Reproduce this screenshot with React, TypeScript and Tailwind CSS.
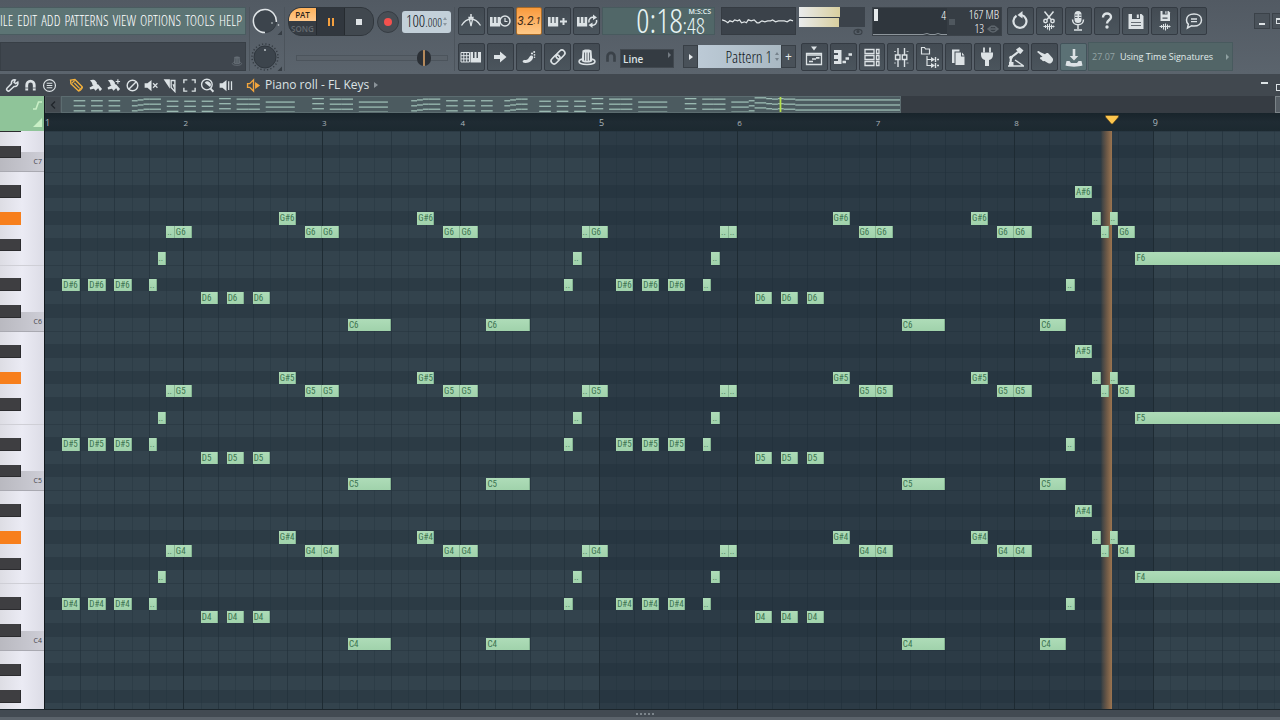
import type { ReactNode } from "react";

const STEPS_IN_VIEW = 142.7;
const STEPS_IN_SONG = 144;
const TOP_PITCH = 84;
const ROWS_ABOVE_TOP = 2.05;
const ROWS_IN_VIEW = 43.5;
const NOTE_NAMES = ["C", "C#", "D", "D#", "E", "F", "F#", "G", "G#", "A", "A#", "B"];
const BLACK_KEYS = [1, 3, 6, 8, 10];
const PLAYHEAD_STEP = 123.3;

// [start step, semitone above C, length in steps]
const PHRASE: Array<[number, number, number]> = [
  [2, 3, 2], [5, 3, 2], [8, 3, 2], [12, 3, 1], [13, 5, 1], [14, 7, 1], [15, 7, 2],
  [18, 2, 2], [21, 2, 2], [24, 2, 2], [27, 8, 2], [30, 7, 2], [32, 7, 2], [35, 0, 5],
  [43, 8, 2], [46, 7, 2], [48, 7, 2], [51, 0, 5], [60, 3, 1], [61, 5, 1], [62, 7, 1], [63, 7, 2],
  [66, 3, 2], [69, 3, 2], [72, 3, 2], [76, 3, 1], [77, 5, 1], [78, 7, 1], [79, 7, 1],
  [82, 2, 2], [85, 2, 2], [88, 2, 2], [91, 8, 2], [94, 7, 2], [96, 7, 2], [99, 0, 5],
  [107, 8, 2], [110, 7, 2], [112, 7, 2], [115, 0, 3], [118, 3, 1], [119, 10, 2],
  [121, 8, 1], [122, 7, 1], [123, 8, 1], [124, 7, 2], [126, 5, 18],
];

const NOTES = [6, 5, 4].flatMap((octave) =>
  PHRASE.map(([start, semitone, length]) => ({
    start,
    length,
    pitch: octave * 12 + semitone,
    label: length === 1 ? ".." : `${NOTE_NAMES[semitone]}${octave}`,
  })),
);

const PITCHES = Array.from({ length: 47 }, (_, i) => TOP_PITCH + 3 - i);

const xPct = (step: number) => `${(step / STEPS_IN_VIEW) * 100}%`;
const yPct = (pitch: number) => `${((TOP_PITCH - pitch + ROWS_ABOVE_TOP) / ROWS_IN_VIEW) * 100}%`;
const hPct = (rows: number) => `${(rows / ROWS_IN_VIEW) * 100}%`;

const condensed =
  "font-['Open_Sans_Condensed_Light','Open_Sans_Condensed','Roboto_Condensed','Liberation_Sans_Narrow','Liberation_Sans',sans-serif] font-light";

function Svg({ children, size = 24, className = "" }: { children: ReactNode; size?: number; className?: string }) {
  return (
    <svg
      viewBox="0 0 24 24"
      width={size}
      height={size}
      fill="none"
      stroke="currentColor"
      strokeWidth={1.5}
      className={`shrink-0 ${className}`}
      aria-hidden="true"
    >
      {children}
    </svg>
  );
}

const fill = { fill: "currentColor", stroke: "none" };
const keysPath = "M2 8h2.6v6h1.2V8h2.6v6h1.2V8h2.6v9.5H2z";

const icons: Record<string, ReactNode> = {
  metronome: (
    <>
      <path d="M2.500 16.500C5 12.500 8 10 12 10s7 2.500 9.500 6.500" strokeWidth={1.3} />
      <path d="M10 8.500h4L12 17z" strokeWidth={1.3} />
      <path d="M12 5v5" />
    </>
  ),
  wait: (
    <>
      <path {...fill} d={keysPath} />
      <circle cx="17" cy="12" r="5" fill="#464f57" />
      <path d="M17 9v3.500h2.500" strokeWidth={1.2} />
    </>
  ),
  keysPlus: (
    <>
      <path {...fill} d={keysPath} />
      <path d="M17.500 9v7M14 12.500h7" strokeWidth={2} />
    </>
  ),
  loopRecord: (
    <>
      <path {...fill} d={keysPath} />
      <path d="M14 13.500a4 4 0 0 1 5-5M21.500 11a4 4 0 0 1-5 5" strokeWidth={1.6} />
      <path {...fill} d="M18 5.500l4 3-4 2.500zM17.500 13.500l-4 2.500 4 3z" />
    </>
  ),
  gridKeys: (
    <>
      <path d="M2 7.500h8.500v9.500H2zM2 10.700h8.500M2 13.900h8.500M4.800 7.500V17M7.700 7.500V17" strokeWidth={1} />
      <path {...fill} d="M11.500 7H14v6h1.500V7h2v6H19V7h3v10.500H11.500z" />
    </>
  ),
  arrow: <path {...fill} d="M6 10h6V6.500l6.500 5.500-6.500 5.500V14H6z" />,
  step: (
    <>
      <path {...fill} d="M6 15.500c2-1 3.500 0 5-1.500s1.500-3.500 3.500-3.500 2 2.500.5 4.500-4 3-6.500 3-3.500-1.500-2.500-2.500z" />
      <circle {...fill} cx="15" cy="8.500" r="1.1" />
      <circle {...fill} cx="17.200" cy="7" r="1" />
      <circle {...fill} cx="17.500" cy="9.800" r=".9" />
      <circle {...fill} cx="17.500" cy="12.200" r=".8" />
    </>
  ),
  link: (
    <g transform="rotate(-45 12 12)" strokeWidth={1.6}>
      <rect x="3.500" y="9" width="10" height="6" rx="3" />
      <rect x="10.500" y="9" width="10" height="6" rx="3" />
    </g>
  ),
  hat: (
    <>
      <ellipse cx="12" cy="16.500" rx="8" ry="3" />
      <path {...fill} d="M7.500 5.500c1-1.500 8-1.500 9 0l.8 10.500c-2 2-8.600 2-10.600 0z" />
      <path d="M9.500 7.500v8M12 7.500v8.500M14.500 7.500v8" stroke="#464f57" strokeWidth={0.8} />
    </>
  ),
  undo: (
    <>
      <path d="M8.500 6.800a6.500 6.500 0 1 0 5-.8" strokeWidth={2.2} />
      <path {...fill} d="M14.500 2v7.500L9.500 6z" />
    </>
  ),
  cut: (
    <>
      <path d="M7.500 2.500l6.500 8M16.500 2.500l-6.500 8" />
      <circle cx="8.500" cy="12" r="1.7" />
      <circle cx="15.500" cy="12" r="1.7" />
      <path d="M6.500 17.500h11M8.500 16v3M10.500 15v5.500M12.500 14.500v7M14.500 15.500v4.500M16.300 16.500v2" strokeWidth={1.1} />
    </>
  ),
  mic: (
    <>
      <rect {...fill} x="8.500" y="2" width="7" height="12" rx="3.500" />
      <path d="M9 6h2.500M9 8.500h2.500M13 6h2.500M13 8.500h2.500" stroke="#464f57" strokeWidth={0.9} />
      <path d="M6.500 10.500c0 7 11 7 11 0M12 16v4M8 21h8" />
    </>
  ),
  help: (
    <>
      <path d="M8 8.500c0-5.500 8-5 8-.5 0 3-4 3-4 6.500" strokeWidth={2.4} />
      <circle {...fill} cx="12" cy="18" r="1.7" />
    </>
  ),
  save: (
    <>
      <path {...fill} d="M4.500 5h13l2 2v13h-15z" />
      <path fill="#464f57" stroke="none" d="M8 5h8v5H8z" />
      <path {...fill} d="M12.800 5.500h2v3.500h-2z" />
      <path d="M7 13.500h10M7 16.500h10" stroke="#464f57" strokeWidth={0.8} />
    </>
  ),
  saveNew: (
    <>
      <path {...fill} d="M7.500 2h8l1.500 1.500V12H7.500z" />
      <path fill="#464f57" stroke="none" d="M9.500 2h5v3.500h-5zM9.500 8.500h5v1.300h-5z" />
      <path {...fill} d="M12.300 2.200h1.200v2.500h-1.200z" />
      <path d="M6.500 17.500h11M8.500 16v3M10.500 15v5.500M12.500 14.500v7M14.500 15.500v4.500M16.300 16.500v2" strokeWidth={1.1} />
    </>
  ),
  chat: (
    <>
      <path d="M12 5c4.400 0 7.500 2.500 7.500 6s-3.100 6-7.500 6c-.8 0-1.600-.1-2.300-.3L5.500 19l.8-3.800C5 14.200 4.500 12.700 4.500 11c0-3.500 3.100-6 7.500-6z" />
      <path d="M9 10h6M9 12.700h6" strokeWidth={1.3} />
    </>
  ),
  playlist: (
    <>
      <path {...fill} d="M9 1.500h6l-3 4z" />
      <path d="M4.500 8.500h15v11h-15z" strokeWidth={1.3} />
      <path d="M4.500 10h15M7 16.500h4M10 14h4M14 12.800h3.500" strokeWidth={1.7} />
    </>
  ),
  pianoRoll: (
    <>
      <path {...fill} d="M3 5h7.500v14H3v-3h4v-2H3v-4h4V8H3z" />
      <path d="M11.500 17h3.500M14.500 13.500h3.500M17.500 9.500H21" strokeWidth={2.6} />
    </>
  ),
  rack: (
    <g strokeWidth={1.3}>
      <path d="M5 4.500h9v4H5zM5 10.500h9v4H5zM5 16.500h9v4H5z" />
      <path d="M16.500 4.500h2.500v4h-2.500zM16.500 10.500h2.500v4h-2.500zM16.500 16.500h2.500v4h-2.500z" />
    </g>
  ),
  mixer: (
    <g strokeWidth={1.4}>
      <path d="M9 3v7M9 14v8M15.500 3v7M15.500 14v8" />
      <path d="M6.500 10h4.500v4.500H6.500zM13.300 10h4.500v4.500h-4.500z" />
      <path d="M5 6.500h2M5 18h2M17.500 6.500h2M17.500 18h2" strokeWidth={0.7} />
    </g>
  ),
  browser: (
    <>
      <path d="M3.500 2.500h3l1 1.500h4v5h-8z" strokeWidth={1.2} />
      <path d="M9 11v9.500h4M9 14.500h4" strokeWidth={1.2} />
      <path {...fill} d="M13 12l4 2.500-4 2.500zM13 18l4 2.500-4 2.500z" />
      <path d="M17.500 12v5M19 14.500h2M17.500 18v5M19 20.500h2" strokeWidth={1.4} />
    </>
  ),
  copy: (
    <>
      <path {...fill} d="M6 4.500h7.500v2H8.500v11.500H6z" />
      <path {...fill} d="M9.500 7.500h5.500v4h3.500V20h-9z" />
      <path {...fill} d="M16 7.500l2.500 3H16z" />
    </>
  ),
  plug: (
    <>
      <path d="M9 2.500v5M15 2.500v5" strokeWidth={1.8} />
      <path {...fill} d="M6 7.500h12v2.500c0 3-2 4.500-4 5V21h-4v-6c-2-.5-4-2-4-5z" />
    </>
  ),
  robot: (
    <>
      <path d="M6.500 18L7 12.500 14 7" strokeWidth={2.2} />
      <path {...fill} d="M12 4.500l3.500-2.500 4 3.500-3 3.500-2-1z" />
      <path d="M4 21h16M11 15l8 5.500" strokeWidth={1.5} />
      <circle {...fill} cx="7" cy="12.500" r="1.8" />
      <path {...fill} d="M5 17h4.500v4H5z" />
    </>
  ),
  hand: (
    <path
      {...fill}
      d="M4.500 6.500c1-1 2 0 3 .7l4.500 2c1-1 2.500-1.500 3.500-.7l4 4.500c1 1.500.5 3-.5 4.200-1.500 1.800-3.500 1.300-5 .3l-2.500-1.500c-1.500.5-2.500-.3-2.700-1.300-1.300-.2-2-1-1.800-2.200l2.500-.7-4.500-4c-.6-.4-.9-.9-.5-1.300z"
    />
  ),
  download: (
    <>
      <path {...fill} d="M10.700 4h2.600v7h3L12 15.500 7.700 11h3z" />
      <path {...fill} d="M4.500 16h3l1.500 2h6l1.500-2h3l1 4.500c-4 1.500-13 1.500-17 0z" />
    </>
  ),
  // editor tool strip
  wrench: (
    <path d="M20.500 6.500l-3.500 2.500-2.500-2 2-4c-4-.8-7 2-6 6L3.500 16a2.700 2.700 0 0 0 4 4l7-6.500c4 .8 7-2.500 6-7z" strokeWidth={2.4} />
  ),
  magnet: (
    <>
      <path d="M6 20v-9a6 6 0 0 1 12 0v9" strokeWidth={4.5} />
      <path d="M3.500 16h5M15.500 16h5" stroke="#41484f" strokeWidth={1.2} />
    </>
  ),
  menu: (
    <>
      <circle cx="12" cy="12" r="9.500" strokeWidth={1.9} />
      <path d="M7.500 8.500h9M7.500 12h9M7.500 15.500h9" strokeWidth={1.7} />
    </>
  ),
  pencil: (
    <>
      <path d="M2.500 3.500l7-1 11.500 11.500c1.500 2-4.500 8-6 6.500L3 9z" strokeWidth={2.2} />
      <path d="M9 4L4.500 8.500M8.500 8l8.500 8.500M15 20.500l6-6" strokeWidth={1.8} />
    </>
  ),
  brush: (
    <>
      <path {...fill} d="M3 4c3-2 7-2 9.500 1l2 3-4.500 4.500c-2 .5-3-1-3-3C6.500 7.500 5 5.500 3 4z" />
      <path {...fill} d="M2.500 15l7.500-4 3-3 6 5.500-7 7-2.500-3.500-6 1.500zM14 12l2.500-1.500 6 7-3.500 3.500z" />
    </>
  ),
  brushPlus: (
    <>
      <path {...fill} d="M3 4c3-2 7-2 9.500 1l2 3-4.500 4.500c-2 .5-3-1-3-3C6.500 7.500 5 5.500 3 4z" />
      <path {...fill} d="M2.500 15l7.500-4 3-3 6 5.500-7 7-2.500-3.500-6 1.500zM14 12l2.500-1.500 6 7-3.500 3.500z" />
      <path d="M19 2v7M15.500 5.500h7" strokeWidth={1.8} />
    </>
  ),
  ban: (
    <>
      <circle cx="12" cy="12" r="8.500" strokeWidth={2.3} />
      <path d="M18 6L6 18" strokeWidth={2.3} />
    </>
  ),
  mute: (
    <>
      <path {...fill} d="M1 8.500h4.500L12 3v18l-6.500-5.500H1z" />
      <path d="M14.500 8.500l7 7M21.500 8.500l-7 7" strokeWidth={2} />
    </>
  ),
  slice: (
    <>
      <path {...fill} d="M1 2h10v15z" />
      <path d="M13 4h6v17.500L13 15z" strokeWidth={2.2} />
      <path {...fill} d="M15 10h3.500v9z" />
    </>
  ),
  select: <path d="M3 8.500V3h5.500M15.500 3H21v5.500M21 15.500V21h-5.500M8.500 21H3v-5.500" strokeWidth={2.2} />,
  zoom: (
    <>
      <circle cx="11" cy="10.500" r="8.500" strokeWidth={2.2} />
      <path {...fill} d="M7.500 7.500a5.500 5.500 0 0 1 8.500 7z" />
      <path d="M16.500 16.500l5 5.500" strokeWidth={3} />
    </>
  ),
  playback: (
    <>
      <path {...fill} d="M1 8.500h4.500L12 3v18l-6.500-5.500H1z" />
      <path d="M15.500 5v14M20 5v14" strokeWidth={2} />
    </>
  ),
  speaker: (
    <>
      <path d="M2.500 9H6l6-6v18l-6-6H2.500z" strokeWidth={2.2} />
      <path {...fill} d="M14.500 6.500l8 5.500-8 5.500z" />
    </>
  ),
};

function ToolButton({ name, lit = false }: { name: string; lit?: boolean }) {
  return (
    <button
      type="button"
      aria-label={name}
      className={`flex h-7 items-center justify-center overflow-hidden rounded-[2px] border text-[#dce2e5] ${
        lit ? "border-[#42535a] bg-[#5b7175]" : "border-[#343b43] bg-linear-to-b from-[#434b53] to-[#4b555d]"
      }`}
    >
      <Svg>{icons[name]}</Svg>
    </button>
  );
}

function Knob({ label, ring = false }: { label: string; ring?: boolean }) {
  return (
    <label className="relative flex h-7 items-center justify-center">
      <svg viewBox="0 0 34 28" width="34" height="28" fill="none" aria-hidden="true">
        {ring ? (
          <>
            <circle cx="15" cy="14" r="11.500" fill="#3c444c" stroke="#343b42" />
            <path d="M15 25.500A11.500 11.500 0 1 1 26.300 15" stroke="#dfe4e7" strokeWidth="1.500" />
            <circle cx="22" cy="16" r=".8" fill="#cfd5d9" />
            <circle cx="28.500" cy="18" r=".8" fill="#cfd5d9" />
          </>
        ) : (
          <>
            <circle cx="15" cy="14" r="13" stroke="#343b42" strokeWidth="1.500" strokeDasharray="1.200 2.200" />
            <circle cx="15" cy="14" r="11" fill="#3c444c" stroke="#30373e" />
            <circle cx="15" cy="7" r=".9" fill="#cfd5d9" />
          </>
        )}
        <path d="M32 23.500v4.500h-4.500z" fill="#363d44" />
      </svg>
      <input type="range" aria-label={label} className="absolute inset-0 h-full w-full opacity-0" />
    </label>
  );
}

function Header() {
  const menus = ["ILE", "EDIT", "ADD", "PATTERNS", "VIEW", "OPTIONS", "TOOLS", "HELP"];
  return (
    <header className="flex overflow-hidden bg-linear-to-b from-[#525a63] to-[#5b646d] pt-[7px] pb-[3px]">
      <div className="flex w-[246px] shrink-0 flex-col gap-[7px]">
        <nav className={`flex h-7 items-center justify-between border border-l-0 border-[#4a5c60] bg-[#5c7474] pr-[3px] text-sm text-white ${condensed}`}>
          {menus.map((menu) => (
            <button key={menu} type="button">
              {menu}
            </button>
          ))}
        </nav>
        <div className="flex h-[29px] items-end justify-end border border-[#383f46] bg-[#3f464e] pr-px pb-0.5 text-[#646c74]">
          <Svg size={14}>{icons.hat}</Svg>
        </div>
      </div>

      <div className="ml-[3px] flex w-9 shrink-0 flex-col gap-2 border-x border-[#4c545c]">
        <Knob label="Main volume" ring />
        <Knob label="Main pitch" />
      </div>

      <div className="flex w-[170px] shrink-0 flex-col gap-[7px] border-r border-[#4c545c] pl-[3px]">
        <div className="flex items-center gap-[3px]">
          <div className="flex h-[29px] w-[86px] overflow-hidden rounded-[13px] border border-[#30363c] bg-[#363c43]">
            <div className="flex w-7 flex-col border-r border-[#262b30] text-center text-[8px] font-semibold">
              <button type="button" className="h-[13px] bg-linear-to-b from-[#ffb25a] to-[#ffc88a] leading-[13px] text-[#2d241b]">
                PAT
              </button>
              <button type="button" className="flex-1 leading-[13px] text-[#646a70]">
                SONG
              </button>
            </div>
            <button type="button" aria-label="Pause" className="flex w-7 items-center justify-center gap-0.5 border-r border-[#262b30] bg-[#31373e]">
              <span className="h-2 w-0.5 bg-[#f5a03f]" />
              <span className="h-2 w-0.5 bg-[#f5a03f]" />
            </button>
            <button type="button" aria-label="Stop" className="flex flex-1 items-center justify-center bg-[#41484f]">
              <span className="size-1.5 bg-[#dfe3e6]" />
            </button>
          </div>
          <button type="button" aria-label="Record" className="flex size-[22px] items-center justify-center rounded-full border border-[#363c43] bg-[#474e55]">
            <span className="size-2 rounded-full bg-[#f4514e]" />
          </button>
          <div className={`flex h-[22px] w-[49px] items-center justify-between rounded-[3px] bg-[#c3d0d9] px-1 text-[#10161b] ${condensed}`}>
            <span className="text-base leading-none">
              100<span className="text-xs">.000</span>
            </span>
            <svg width="4" height="9" viewBox="0 0 4 9" fill="#8c98a1" aria-hidden="true">
              <path d="M0 3l2-3 2 3zM0 6h4L2 9z" />
            </svg>
          </div>
        </div>
        <input
          type="range"
          aria-label="Song position"
          defaultValue={88}
          className="mt-3 ml-2 h-1.5 w-[152px] appearance-none border border-[#4c545c] bg-[#596169] [&::-webkit-slider-thumb]:h-4 [&::-webkit-slider-thumb]:w-3.5 [&::-webkit-slider-thumb]:appearance-none [&::-webkit-slider-thumb]:rounded-full [&::-webkit-slider-thumb]:bg-[linear-gradient(90deg,#2b3036_6px,#b58a5c_6px,#b58a5c_8px,#2b3036_8px)]"
        />
      </div>

      <div className="flex min-w-0 flex-1 flex-col gap-[7px] pl-[3px]">
        <div className="flex h-7 items-start">
          <div className="grid w-[142px] shrink-0 grid-cols-5 gap-0.5">
            <ToolButton name="metronome" />
            <ToolButton name="wait" />
            <button
              type="button"
              className="flex h-7 items-center justify-center rounded-[2px] border border-[#a56a2a] bg-linear-to-b from-[#f99a3a] to-[#ffc987] font-['Roboto',sans-serif] text-xs leading-none text-[#3b2a17] italic"
            >
              3.2<span className="text-[9px]">.1</span>
            </button>
            <ToolButton name="keysPlus" />
            <ToolButton name="loopRecord" />
          </div>
          <div className={`ml-0.5 flex h-7 w-[113px] shrink-0 justify-end border border-[#485a5e] bg-[#516768] pr-[3px] text-[#e6f3f3] ${condensed}`}>
            <span className="text-[33px] leading-[26px]">0:18</span>
            <span className="flex flex-col">
              <span className="pl-1.5 font-['Open_Sans',sans-serif] text-[7px] leading-[8px] font-semibold">M:S:CS</span>
              <span className="text-[22px] leading-[18px]">:48</span>
            </span>
          </div>
          <div className="ml-1.5 flex h-7 w-[75px] shrink-0 items-center border border-[#353b42] bg-[#3b424a]">
            <svg viewBox="0 0 75 12" className="w-full" fill="none" stroke="#dfe4e6" strokeWidth="1.300" aria-hidden="true">
              <path d="M0 5l3 1 3 2 2-2 3 1 2-2 3 1 2-1 2 3 3-1 2 1 2-3 3 1 3-1 3 3 2 0 3-2 3 1 3-1 3 0 2-1 3 2 3-1 3 0 3 0 3 1 3-2 3 1" />
            </svg>
          </div>
          <div className="ml-[3px] flex w-[66px] shrink-0 flex-col">
            <div className="flex h-5 flex-col gap-px bg-[#3b424a]">
              <span className="h-[10px] w-[41px] bg-linear-to-r from-[#e9ebec] to-[#d9cf9f]" />
              <span className="h-[9px] w-10 bg-linear-to-r from-[#e9ebec] to-[#d9cf9f]" />
            </div>
            <svg viewBox="0 0 10 8" width="10" height="8" fill="none" stroke="#3a4148" strokeWidth="1.200" className="mr-0.5 self-end" aria-hidden="true">
              <ellipse cx="5" cy="5" rx="4" ry="2.700" />
              <circle cx="5" cy="4.500" r="1" fill="#3a4148" />
            </svg>
          </div>
          <div className={`ml-[7px] flex h-[29px] w-[130px] shrink-0 border border-[#3b4249] bg-[#2f363d] text-[12px] leading-[14px] text-white ${condensed}`}>
            <div className="relative flex w-[74px] justify-between p-px">
              <span className="h-3 w-1 bg-[#e6eaec]" />
              <span>4</span>
              <svg viewBox="0 0 74 4" className="absolute bottom-0 left-0 w-full" fill="none" stroke="#8d959b" aria-hidden="true">
                <path d="M0 3.500h50l4-1 3 1h5l3-1 3 1h6" />
              </svg>
            </div>
            <div className="flex flex-1 items-center bg-[#363d44] pr-0.5">
              <span className="ml-0.5 size-1.5 bg-[#4f575e]" />
              <div className="ml-auto flex flex-col items-end">
                <span>167 MB</span>
                <span className="flex items-center gap-[3px]">
                  13
                  <svg viewBox="0 0 12 8" width="12" height="8" fill="none" stroke="#5d656c" strokeWidth="1.500" aria-hidden="true">
                    <path d="M1 4c2-1.500 3-3 4-3l1 .6L7 1c1 0 2 1.500 4 3-2 2-3 3-5 3S3 6 1 4zM1 4h10" />
                  </svg>
                </span>
              </div>
            </div>
          </div>
          <div className="ml-[5px] grid w-[200px] shrink-0 grid-cols-7 gap-0.5">
            {["undo", "cut", "mic", "help", "save", "saveNew", "chat"].map((name) => (
              <ToolButton key={name} name={name} />
            ))}
          </div>
          <div className="mt-1.5 -mr-2 ml-auto flex shrink-0 gap-0.5">
            <button type="button" aria-label="Minimize" className="flex size-4 items-end justify-center border border-[#3b4249] bg-[#4a525a] pb-[3px]">
              <span className="h-0.5 w-1.5 bg-[#dce2e5]" />
            </button>
            <button type="button" aria-label="Maximize" className="flex size-4 items-center justify-center border border-[#3b4249] bg-[#4a525a]">
              <span className="h-1.5 w-2 border border-t-2 border-[#dce2e5]" />
            </button>
          </div>
        </div>

        <div className="flex items-center">
          <div className="grid w-[142px] shrink-0 grid-cols-5 gap-0.5">
            {["gridKeys", "arrow", "step", "link", "hat"].map((name) => (
              <ToolButton key={name} name={name} />
            ))}
          </div>
          <Svg size={14} className="ml-1 text-[#3a4148]">{icons.magnet}</Svg>
          <div className="relative ml-0.5 w-[54px] shrink-0">
            <select
              aria-label="Snap"
              className="h-[19px] w-full appearance-none border border-[#41484f] bg-[#343b42] pl-0.5 text-[10px] leading-4 font-semibold text-[#dce2e5]"
            >
              <option>Line</option>
            </select>
            <span className="pointer-events-none absolute top-[7px] right-[3px] border-y-[3px] border-l-[3px] border-y-transparent border-l-[#737b82]" />
          </div>
          <div className="ml-[9px] flex h-[23px] shrink-0">
            <button type="button" aria-label="Play pattern" className="flex w-[15px] items-center justify-center border border-[#383f46] bg-[#495159]">
              <span className="border-y-[3px] border-l-4 border-y-transparent border-l-[#e6eaec]" />
            </button>
            <button type="button" className={`flex w-[83px] items-center justify-end gap-[3px] bg-linear-to-r from-[#bccad6] to-[#a9b8c2] pr-0.5 text-base leading-none text-[#10161b] ${condensed}`}>
              Pattern 1
              <svg width="4" height="9" viewBox="0 0 4 9" fill="#77838c" aria-hidden="true">
                <path d="M0 3l2-3 2 3zM0 6h4L2 9z" />
              </svg>
            </button>
            <button type="button" aria-label="Add pattern" className="w-[15px] border border-[#383f46] bg-[#495159] text-xs leading-none text-[#e6eaec]">
              +
            </button>
          </div>
          <div className="ml-[5px] grid w-[286px] shrink-0 grid-cols-10 gap-0.5">
            {["playlist", "pianoRoll", "rack", "mixer", "browser", "copy", "plug", "robot", "hand"].map((name) => (
              <ToolButton key={name} name={name} />
            ))}
            <ToolButton name="download" lit />
          </div>
          <a
            href="#news"
            className="ml-px flex h-[29px] w-[145px] shrink-0 items-center border border-[#485a5e] bg-[#526567] px-[3px] text-[9px] whitespace-nowrap text-[#e0ebeb]"
          >
            <span className="text-[#93a3a4]">27.07</span>
            <span className="ml-[5px]">Using Time Signatures</span>
            <span className="ml-auto border-y-[3px] border-l-[3px] border-y-transparent border-l-[#8fa0a1]" />
          </a>
        </div>
      </div>
    </header>
  );
}

function EditorBar() {
  return (
    <div className="flex h-[22px] shrink-0 items-center bg-[#41484f] pl-[3px] text-[#dce2e5]">
      <div className="grid w-14 shrink-0 grid-cols-3">
        {["wrench", "magnet", "menu"].map((name) => (
          <button key={name} type="button" aria-label={name} className="flex justify-center">
            <Svg size={15}>{icons[name]}</Svg>
          </button>
        ))}
      </div>
      <div className="ml-2 grid w-[169px] shrink-0 grid-cols-9">
        {["pencil", "brush", "brushPlus", "ban", "mute", "slice", "select", "zoom", "playback"].map((name) => (
          <button key={name} type="button" aria-label={name} className={`flex justify-center ${name === "pencil" ? "text-[#f3b13d]" : ""}`}>
            <Svg size={15}>{icons[name]}</Svg>
          </button>
        ))}
      </div>
      <button type="button" className="ml-2.5 flex items-center gap-1 text-xs whitespace-nowrap">
        <Svg size={15} className="text-[#f3a53d]">{icons.speaker}</Svg>
        Piano roll - FL Keys
        <span className="ml-px border-y-[3px] border-l-4 border-y-transparent border-l-[#8b9399]" />
      </button>
      <div className="ml-auto flex items-center gap-2">
        <button type="button" aria-label="Minimize editor" className="mb-1 h-0.5 w-[7px] bg-[#dce2e5]" />
        <button type="button" aria-label="Maximize editor" className="mt-1 -mr-1 h-[7px] w-2 border border-[#dce2e5]" />
      </div>
    </div>
  );
}

function Overview() {
  const octaveRow = (pitch: number) => 5.5 + (72 - pitch) * 0.42;
  return (
    <div className="flex h-[17px] bg-[#363c43]">
      <button type="button" aria-label="Scroll left" className="w-4 border border-[#4a5359] bg-[#42494f] text-[#20262b]">
        <svg viewBox="0 0 14 15" width="14" height="15" fill="none" stroke="currentColor" strokeWidth="1.300" aria-hidden="true">
          <path d="M9 4.500L5.500 8 9 11.500" />
        </svg>
      </button>
      <div className="flex flex-1">
        <div className="w-[69.2%] border border-[#5c6c70] bg-[#4c5b60]">
          <svg viewBox="0 0 144 15" preserveAspectRatio="none" className="h-full w-full" aria-hidden="true">
            {NOTES.map((note) => (
              <rect
                key={`${note.start}-${note.pitch}`}
                x={note.start}
                y={octaveRow(note.pitch) - 1}
                width={Math.min(note.length, STEPS_IN_SONG - note.start)}
                height={1.1}
                fill="#aacdc2"
              />
            ))}
            <rect x={PLAYHEAD_STEP} y={0} width={0.3} height={15} fill="#b6e04a" />
          </svg>
        </div>
      </div>
      <button type="button" aria-label="Scroll right" className="w-[5px] border border-r-0 border-[#7b8388] bg-[#565e65]" />
    </div>
  );
}

function Ruler() {
  return (
    <div className="relative h-[18px] overflow-hidden bg-linear-to-b from-[#18242b] via-[#1f2b33] to-[#1c2930]">
      {Array.from({ length: 9 }, (_, i) => (
        <span
          key={i}
          className={`absolute top-1 leading-3 text-[#aab5ba] ${i % 4 === 0 ? "text-[9px]" : "text-[8px]"}`}
          style={{ left: xPct(i * 16) }}
        >
          {i + 1}
        </span>
      ))}
      <svg
        viewBox="0 0 14 10"
        width="14"
        height="10"
        className="absolute top-0.5 -translate-x-1/2"
        style={{ left: xPct(PLAYHEAD_STEP) }}
        aria-hidden="true"
      >
        <path d="M.5.500h13v1.500L7.500 9h-1L.5 2z" fill="#fdc64e" stroke="#5c4519" strokeWidth=".6" />
      </svg>
    </div>
  );
}

function Keyboard() {
  return (
    <div className="relative w-[45px] shrink-0 overflow-hidden border-r border-[#11181d] bg-linear-to-r from-[#dddde4] via-[#ebebf4] to-[#dcdce6]">
      {[84, 72, 60, 48].map((pitch) => (
        <div
          key={pitch}
          className="absolute inset-x-0 border-b border-[#a9a9b1] bg-linear-to-r from-[#b9b9c0] to-[#cdcdd6] pr-0.5 text-right text-[7px] leading-5 text-[#45454b]"
          style={{ top: yPct(pitch + 0.45), height: hPct(1.5) }}
        >
          C{pitch / 12}
        </div>
      ))}
      {[77, 65, 53].map((pitch) => (
        <div key={pitch} className="absolute inset-x-0 border-t border-[#cfcfd6]" style={{ top: yPct(pitch - 1) }} />
      ))}
      {PITCHES.filter((pitch) => BLACK_KEYS.includes(pitch % 12)).map((pitch) => (
        <div
          key={pitch}
          className={`absolute left-0 w-[21px] ${
            pitch % 12 === 8 && pitch > 50 ? "bg-[#f77f1c]" : "border-r border-b border-[#2b2b2e] bg-[#3e3e41]"
          }`}
          style={{ top: yPct(pitch - 0.05), height: hPct(0.95) }}
        />
      ))}
    </div>
  );
}

function NoteGrid() {
  return (
    <div className="relative min-w-0 flex-1 overflow-hidden bg-[#33434d]">
      {PITCHES.filter((pitch) => BLACK_KEYS.includes(pitch % 12)).map((pitch) => (
        <div key={pitch} className="absolute inset-x-0 bg-[#2c3b45]" style={{ top: yPct(pitch), height: hPct(1) }} />
      ))}
      {PITCHES.filter((pitch) => [0, 5].includes(pitch % 12)).map((pitch) => (
        <div key={pitch} className="absolute inset-x-0 border-t border-[#2c3b45]" style={{ top: yPct(pitch - 1) }} />
      ))}
      <div className="absolute inset-y-0 bg-[#1e2b37]/30" style={{ left: xPct(64), width: xPct(64) }} />
      {Array.from({ length: 71 }, (_, i) => (i + 1) * 2).map((step) => (
        <div
          key={step}
          className={`absolute inset-y-0 w-px ${
            step % 16 === 0 ? "bg-[#1e2b33]" : step % 4 === 0 ? "bg-[#22313a]/60" : "bg-[#22313a]/30"
          }`}
          style={{ left: xPct(step) }}
        />
      ))}
      <div
        className="absolute inset-y-0 w-[11px] -translate-x-full bg-linear-to-r from-[#7a5f47]/10 via-[#7a5f47]/80 to-[#9c7550]"
        style={{ left: xPct(PLAYHEAD_STEP) }}
      />
      {NOTES.map((note) => (
        <div
          key={`${note.start}-${note.pitch}`}
          className="absolute pt-px"
          style={{ left: xPct(note.start), top: yPct(note.pitch), width: xPct(note.length), height: hPct(1) }}
        >
          <div className="h-full overflow-hidden border-r border-[#84b391] bg-linear-to-b from-[#aedcb8] to-[#a0d2ab] pl-px font-['Liberation_Sans_Narrow','Roboto_Condensed','Liberation_Sans',sans-serif] text-[9px] leading-3 whitespace-nowrap text-[#3c7350]">
            {note.label}
          </div>
        </div>
      ))}
    </div>
  );
}

export default function App() {
  return (
    <div className="flex h-screen flex-col overflow-hidden bg-[#454e57] font-['Open_Sans','Noto_Sans',sans-serif]">
      <Header />
      <EditorBar />
      <div className="flex">
        <div className="flex w-[45px] shrink-0 flex-col items-end justify-between border-r border-[#11181d] bg-[#8fc499] py-1 pr-0.5 text-[#c9efc6]">
          <svg viewBox="0 0 10 10" width="10" height="10" fill="none" stroke="currentColor" strokeWidth="1.600" aria-hidden="true">
            <path d="M1 9h3l2.500-7H10" />
          </svg>
          <svg viewBox="0 0 9 9" width="9" height="9" fill="currentColor" aria-hidden="true">
            <path d="M9 0v9H0z" />
          </svg>
        </div>
        <div className="min-w-0 flex-1">
          <Overview />
          <Ruler />
        </div>
      </div>
      <main className="flex min-h-0 flex-1">
        <Keyboard />
        <NoteGrid />
      </main>
      <footer className="flex h-[11px] shrink-0 items-start justify-center gap-0.5 border-t border-b-[3px] border-t-[#1b252b] border-b-[#5b636b] bg-[#424a52] pt-[3px] pl-2.5">
        {Array.from({ length: 5 }, (_, i) => (
          <span key={i} className="size-0.5 bg-[#7b848b]" />
        ))}
      </footer>
    </div>
  );
}
